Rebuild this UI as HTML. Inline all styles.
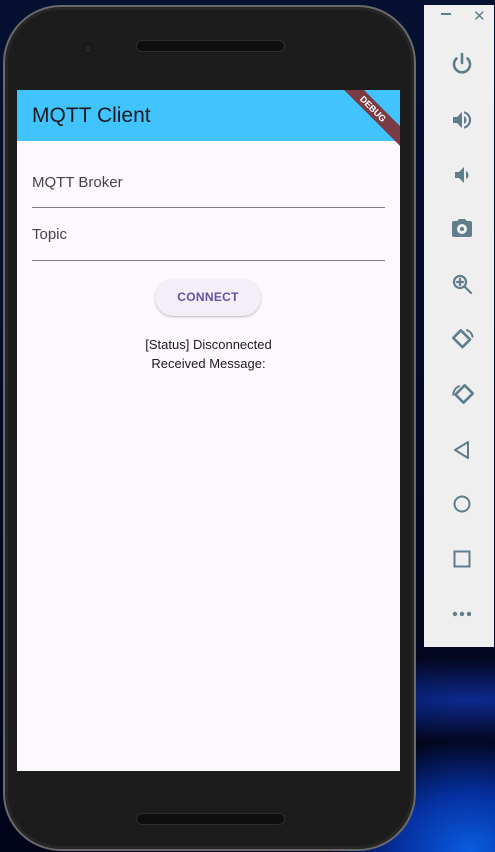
<!DOCTYPE html>
<html><head><meta charset="utf-8"><style>
*{margin:0;padding:0;box-sizing:border-box}
body{width:495px;height:852px;overflow:hidden;position:relative;font-family:"Liberation Sans",sans-serif;
background:radial-gradient(ellipse 180px 140px at 470px 850px,#0a5ce0 0%,#0530a0 40%,transparent 80%),radial-gradient(ellipse 300px 60px at 470px 700px,#0c2a90 0%,transparent 70%),linear-gradient(#061030,#02041a);}
.phone{position:absolute;left:3px;top:5px;width:413px;height:846px;border-radius:58px;background:#1c1c1c;border:2px solid #6a6a6a;box-shadow:inset 0 0 0 3px #262626}
.spk{position:absolute;left:131px;width:149px;height:12px;border-radius:6px;background:#0e0e0e;border:1px solid #2e2e2e}
.cam{position:absolute;left:78px;top:37px;width:10px;height:10px;border-radius:50%;background:#222;border:1px solid #111}
.screen{position:absolute;left:17px;top:90px;width:383px;height:681px;background:#fdf7fe;overflow:hidden}
.bar{height:51px;background:#41c3fd;color:#1b1b1f;font-size:21px;padding:14px 0 0 15px;position:relative}
.ribbon{position:absolute;right:-28px;top:12px;width:110px;height:14px;background:#7a3b44;transform:rotate(45deg);color:#fff;font-size:9px;font-weight:bold;text-align:center;line-height:14px}
.lbl{position:absolute;left:15px;font-size:15px;color:#45434a}
.line{position:absolute;left:15px;width:353px;height:1px;background:#7d7b82}
.btn{position:absolute;left:138px;top:189px;width:106px;height:37px;border-radius:19px;background:#f4eff6;box-shadow:0 1px 2px rgba(0,0,0,.25);color:#6650a4;font-size:12px;font-weight:bold;text-align:center;line-height:37px;letter-spacing:.3px}
.txt{position:absolute;left:0;width:383px;text-align:center;font-size:13px;color:#1d1b20}
.side{position:absolute;left:424px;top:5px;width:70px;height:642px;background:#efefef}
.side svg{position:absolute;left:26px}
</style></head><body>
<div class="phone"><div class="spk" style="top:33px"></div><div class="cam"></div><div class="spk" style="top:806px"></div></div>
<div class="screen">
<div class="bar">MQTT Client<div class="ribbon">DEBUG</div></div>
<div class="lbl" style="top:84px">MQTT Broker</div><div class="line" style="top:117px"></div>
<div class="lbl" style="top:136px">Topic</div><div class="line" style="top:170px"></div>
<div class="btn">CONNECT</div>
<div class="txt" style="top:247px">[Status] Disconnected</div>
<div class="txt" style="top:266px">Received Message:</div>
</div>
<div class="side">
<div style="position:absolute;left:17px;top:8px;width:10px;height:1.5px;background:#607d8b"></div>
<div style="position:absolute;left:49px;top:2px;color:#607d8b;font-size:15px">✕</div>
<svg style="top:47px" width="24" height="24" viewBox="0 0 24 24" fill="none" stroke="#607d8b" stroke-width="2.6" stroke-linecap="round"><path d="M12 2v9"/><path d="M6.5 6.5a8 8 0 1 0 11 0"/></svg>
<svg style="top:103px" width="24" height="24" viewBox="0 0 24 24" fill="#607d8b"><path d="M3 9v6h4l5 5V4L7 9H3z"/><path d="M16.5 12A4.5 4.5 0 0 0 14 8v8a4.5 4.5 0 0 0 2.5-4z"/><path d="M14 3.2v2.1a7 7 0 0 1 0 13.4v2.1a9 9 0 0 0 0-17.6z"/></svg>
<svg style="top:158px" width="24" height="24" viewBox="0 0 24 24" fill="#607d8b"><path d="M5 9v6h4l5 5V4L9 9H5z"/><path d="M18.5 12A4.5 4.5 0 0 0 16 8v8a4.5 4.5 0 0 0 2.5-4z"/></svg>
<svg style="top:212px" width="24" height="24" viewBox="0 0 24 24" fill="#607d8b"><path d="M9 2L7.2 4H4a2 2 0 0 0-2 2v12a2 2 0 0 0 2 2h16a2 2 0 0 0 2-2V6a2 2 0 0 0-2-2h-3.2L15 2H9zm3 15a5 5 0 1 1 0-10 5 5 0 0 1 0 10zm0-3a2 2 0 1 0 0-4 2 2 0 0 0 0 4z"/></svg>
<svg style="top:267px" width="24" height="24" viewBox="0 0 24 24" fill="none" stroke="#607d8b" stroke-width="2.2" stroke-linecap="round"><circle cx="10" cy="10" r="6"/><path d="M14.5 14.5L21 21M10 7v6M7 10h6"/></svg>
<svg style="top:321px" width="26" height="26" viewBox="0 0 24 24" fill="none" stroke="#607d8b" stroke-width="2.4" stroke-linejoin="round"><path d="M10 4l8.5 8.5-7 7L3 11z"/><path d="M15 3.5a9 9 0 0 1 6 7" stroke-width="1.8"/></svg>
<svg style="top:376px" width="26" height="26" viewBox="0 0 24 24" fill="none" stroke="#607d8b" stroke-width="2.4" stroke-linejoin="round"><path d="M13.5 4L21 11.5l-8.5 8.5L5 12.5z"/><path d="M3 13.5a9 9 0 0 1 6-9" stroke-width="1.8"/></svg>
<svg style="top:433px" width="24" height="24" viewBox="0 0 24 24" fill="none" stroke="#607d8b" stroke-width="2" stroke-linejoin="round"><path d="M18 4v16L5 12z"/></svg>
<svg style="top:487px" width="24" height="24" viewBox="0 0 24 24" fill="none" stroke="#607d8b" stroke-width="2"><circle cx="12" cy="12" r="7.5"/></svg>
<svg style="top:542px" width="24" height="24" viewBox="0 0 24 24" fill="none" stroke="#607d8b" stroke-width="2"><rect x="4.5" y="4.5" width="15" height="15"/></svg>
<svg style="top:597px" width="24" height="24" viewBox="0 0 24 24" fill="#607d8b"><circle cx="5" cy="12" r="2.2"/><circle cx="12" cy="12" r="2.2"/><circle cx="19" cy="12" r="2.2"/></svg>
</div>
</body></html>
